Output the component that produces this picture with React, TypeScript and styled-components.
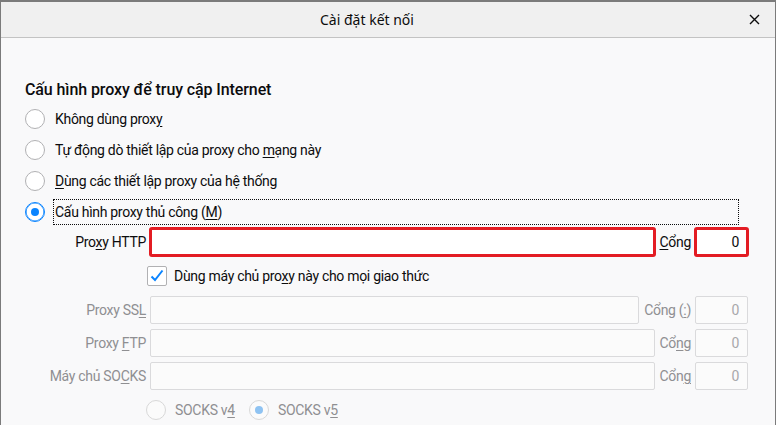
import React from "react";
import styled, { createGlobalStyle, css } from "styled-components";

const GlobalStyle = createGlobalStyle`
  html, body { margin: 0; padding: 0; background: #f9f9fa; }
  body { font-family: Roboto, "Noto Sans", sans-serif; color: #0c0c0d; }
  * { box-sizing: border-box; }
`;

const Window = styled.div`
  width: 776px;
  height: 425px;
  overflow: hidden;
  border-top: 2px solid #7b7b7b;
  border-left: 1px solid #7b7b7b;
  border-right: 1px solid #7b7b7b;
  background: #f9f9fa;
  display: flex;
  flex-direction: column;
`;

const TitleBar = styled.header`
  height: 36px;
  flex: none;
  background: #f0f0f0;
  border-bottom: 1px solid #c3c3c3;
  display: flex;
  align-items: center;
`;

const Title = styled.div`
  flex: 1;
  text-align: center;
  font-family: "Noto Sans", sans-serif;
  font-size: 14px;
  color: #0c0c0d;
`;

const CloseButton = styled.button`
  width: 42px;
  height: 100%;
  border: 0;
  padding: 0;
  background: transparent;
  display: flex;
  align-items: center;
  justify-content: center;
`;

const Body = styled.main`
  flex: 1;
  padding-left: 24px;
  display: flex;
  flex-direction: column;
  font-size: 14px;
  letter-spacing: -0.3px;
`;

const Heading = styled.h2`
  margin: 42px 0 3px 0;
  font-size: 16px;
  line-height: 20px;
  font-weight: 500;
  letter-spacing: -0.1px;
`;

const RadioRow = styled.div`
  height: 31px;
  display: flex;
  align-items: center;
  gap: 8px;
  margin-right: 36px;
`;

const RadioCircle = styled.span<{ $checked?: boolean; $disabled?: boolean }>`
  width: 20px;
  height: 20px;
  flex: none;
  border-radius: 50%;
  border: 1px solid ${(p) => (p.$disabled ? "#d8d8d8" : p.$checked ? "#0a84ff" : "#b1b1b3")};
  background: ${(p) => (p.$disabled ? "#fbfbfb" : "#ffffff")};
  display: flex;
  align-items: center;
  justify-content: center;
  ${(p) =>
    p.$checked &&
    css`
      &::after {
        content: "";
        width: 8px;
        height: 8px;
        border-radius: 50%;
        background: ${p.$disabled ? "#8fc3f2" : "#0a84ff"};
      }
    `}
  ${(p) =>
    p.$checked &&
    !p.$disabled &&
    css`
      box-shadow: inset 0 0 0 0.6px #0a84ff;
    `}
`;

const RadioLabel = styled.span<{ $focused?: boolean }>`
  flex: 1;
  line-height: 24px;
  padding-left: 1px;
  border: 1px dotted ${(p) => (p.$focused ? "#0c0c0d" : "transparent")};
`;

const ProxySection = styled.section`
  margin: 1px 27px 0 28px;
  display: flex;
  flex-direction: column;
  gap: 5px;
`;

const FieldRow = styled.div`
  height: 28px;
  display: flex;
  align-items: center;
  gap: 4px;
`;

const FieldLabel = styled.label<{ $disabled?: boolean }>`
  width: 93px;
  flex: none;
  display: flex;
  justify-content: flex-end;
  white-space: nowrap;
  color: ${(p) => (p.$disabled ? "#8f8f92" : "#0c0c0d")};
`;

const PortLabel = styled.label<{ $disabled?: boolean }>`
  flex: none;
  margin-left: 1px;
  white-space: nowrap;
  color: ${(p) => (p.$disabled ? "#8f8f92" : "#0c0c0d")};
`;

const TextBox = styled.div<{ $disabled?: boolean; $highlight?: boolean }>`
  flex: 1;
  height: 28px;
  border: 1px solid ${(p) => (p.$disabled ? "#dadadc" : "#b1b1b3")};
  border-radius: 2px;
  background: ${(p) => (p.$disabled ? "#fbfbfb" : "#ffffff")};
  ${(p) =>
    p.$highlight &&
    css`
      outline: 3px solid #e31c23;
      outline-offset: -2px;
    `}
`;

const PortBox = styled.div<{ $disabled?: boolean; $highlight?: boolean }>`
  width: 53px;
  flex: none;
  height: 28px;
  border: 1px solid ${(p) => (p.$disabled ? "#dadadc" : "#b1b1b3")};
  border-radius: 2px;
  background: ${(p) => (p.$disabled ? "#fbfbfb" : "#ffffff")};
  line-height: 26px;
  text-align: right;
  padding-right: 8px;
  color: ${(p) => (p.$disabled ? "#a8a8ab" : "#0c0c0d")};
  ${(p) =>
    p.$highlight &&
    css`
      outline: 3px solid #e31c23;
      outline-offset: -2px;
    `}
`;

const CheckRow = styled.div`
  height: 30px;
  display: flex;
  align-items: center;
  gap: 7px;
  padding-left: 94px;
`;

const CheckBox = styled.span`
  width: 20px;
  height: 20px;
  flex: none;
  border: 1px solid #b1b1b3;
  border-radius: 2px;
  background: #ffffff;
  display: flex;
  align-items: center;
  justify-content: center;
`;

const SocksRow = styled.div`
  height: 30px;
  display: flex;
  align-items: center;
  padding-left: 93px;
  gap: 9px;
`;

const SocksLabel = styled.span`
  color: #8f8f92;
  margin-right: 5px;
`;

const U = styled.u`
  text-decoration-thickness: 1px;
  text-underline-offset: 2px;
`;

export default function App() {
  return (
    <>
      <GlobalStyle />
      <Window>
        <TitleBar>
          <Title>Cài đặt kết nối</Title>
          <CloseButton aria-label="Đóng">
            <svg width="11" height="11" viewBox="0 0 11 11">
              <path d="M1 1 L10 10 M10 1 L1 10" stroke="#0c0c0d" strokeWidth="1.4" fill="none" />
            </svg>
          </CloseButton>
        </TitleBar>
        <Body>
          <Heading>Cấu hình proxy để truy cập Internet</Heading>
          <RadioRow>
            <RadioCircle />
            <RadioLabel>
              Không dùng prox<U>y</U>
            </RadioLabel>
          </RadioRow>
          <RadioRow>
            <RadioCircle />
            <RadioLabel>
              Tự động dò thiết lập của proxy cho <U>m</U>ạng này
            </RadioLabel>
          </RadioRow>
          <RadioRow>
            <RadioCircle />
            <RadioLabel>
              <U>D</U>ùng các thiết lập proxy của hệ thống
            </RadioLabel>
          </RadioRow>
          <RadioRow>
            <RadioCircle $checked />
            <RadioLabel $focused>
              Cấu hình proxy thủ công (<U>M</U>)
            </RadioLabel>
          </RadioRow>
          <ProxySection>
            <FieldRow>
              <FieldLabel>
                <span>
                  Pro<U>x</U>y HTTP
                </span>
              </FieldLabel>
              <TextBox $highlight />
              <PortLabel>
                <U>C</U>ổng
              </PortLabel>
              <PortBox $highlight>0</PortBox>
            </FieldRow>
            <CheckRow>
              <CheckBox>
                <svg width="16" height="16" viewBox="0 0 16 16">
                  <path d="M2.5 8.5 L6 12 L13.5 2.5" stroke="#0a84ff" strokeWidth="2" fill="none" />
                </svg>
              </CheckBox>
              <span>
                Dùng máy chủ pro<U>x</U>y này cho mọi giao thức
              </span>
            </CheckRow>
            <FieldRow>
              <FieldLabel $disabled>
                <span>
                  Proxy SS<U>L</U>
                </span>
              </FieldLabel>
              <TextBox $disabled />
              <PortLabel $disabled>
                Cổng (<U>:</U>)
              </PortLabel>
              <PortBox $disabled>0</PortBox>
            </FieldRow>
            <FieldRow>
              <FieldLabel $disabled>
                <span>
                  Proxy <U>F</U>TP
                </span>
              </FieldLabel>
              <TextBox $disabled />
              <PortLabel $disabled>
                Cổ<U>n</U>g
              </PortLabel>
              <PortBox $disabled>0</PortBox>
            </FieldRow>
            <FieldRow>
              <FieldLabel $disabled>
                <span>
                  Máy chủ SO<U>C</U>KS
                </span>
              </FieldLabel>
              <TextBox $disabled />
              <PortLabel $disabled>
                Cổn<U>g</U>
              </PortLabel>
              <PortBox $disabled>0</PortBox>
            </FieldRow>
            <SocksRow>
              <RadioCircle $disabled />
              <SocksLabel>
                SOCKS v<U>4</U>
              </SocksLabel>
              <RadioCircle $disabled $checked />
              <SocksLabel>
                SOCKS v<U>5</U>
              </SocksLabel>
            </SocksRow>
          </ProxySection>
        </Body>
      </Window>
    </>
  );
}
